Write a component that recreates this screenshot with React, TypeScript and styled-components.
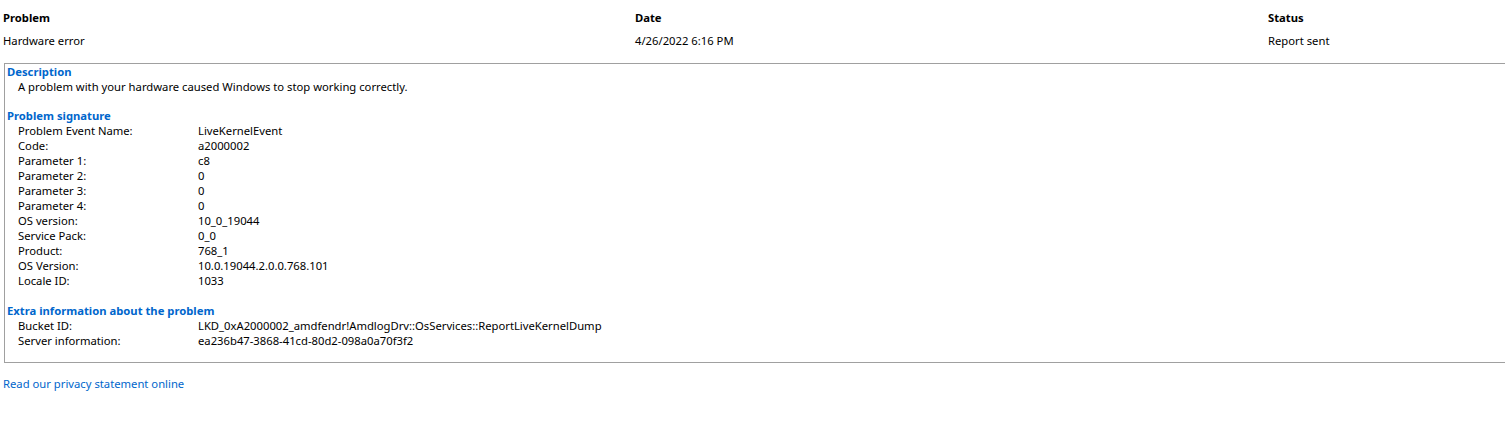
import styled, { createGlobalStyle } from "styled-components";

const Global = createGlobalStyle`
  html, body {
    margin: 0;
    padding: 0;
    background: #fff;
    overflow: hidden;
  }
  body {
    font-family: "Noto Sans", "Open Sans", sans-serif;
    font-size: 11.25px;
    color: #000;
  }
`;

const Page = styled.div`
  width: 1505px;
  padding: 10px 0 0 3px;
`;

const Summary = styled.div`
  display: grid;
  grid-template-columns: 632px 633px 1fr;
  row-gap: 8px;
  line-height: 15px;
`;

const HeadCell = styled.div`
  font-weight: 700;
`;

const Cell = styled.div``;

const Details = styled.div`
  margin-top: 15px;
  margin-left: 1px;
  width: 1510px;
  border: 1px solid #a0a0a0;
  padding: 0 0 14px 2px;
  line-height: 15px;
`;

const Section = styled.section<{ $gap?: number }>`
  margin-top: ${(p) => p.$gap ?? 0}px;
`;

const SectionTitle = styled.div`
  color: #0066cc;
  font-weight: 700;
`;

const Indented = styled.div`
  padding-left: 11px;
`;

const Row = styled.div`
  display: grid;
  grid-template-columns: 180px 1fr;
  padding-left: 11px;
`;

const PrivacyLink = styled.a`
  display: inline-block;
  margin-top: 13px;
  color: #0066cc;
  text-decoration: none;
  line-height: 15px;
`;

const signature: [string, string][] = [
  ["Problem Event Name:", "LiveKernelEvent"],
  ["Code:", "a2000002"],
  ["Parameter 1:", "c8"],
  ["Parameter 2:", "0"],
  ["Parameter 3:", "0"],
  ["Parameter 4:", "0"],
  ["OS version:", "10_0_19044"],
  ["Service Pack:", "0_0"],
  ["Product:", "768_1"],
  ["OS Version:", "10.0.19044.2.0.0.768.101"],
  ["Locale ID:", "1033"],
];

const extra: [string, string][] = [
  ["Bucket ID:", "LKD_0xA2000002_amdfendr!AmdlogDrv::OsServices::ReportLiveKernelDump"],
  ["Server information:", "ea236b47-3868-41cd-80d2-098a0a70f3f2"],
];

export default function App() {
  return (
    <>
      <Global />
      <Page>
        <Summary>
          <HeadCell>Problem</HeadCell>
          <HeadCell>Date</HeadCell>
          <HeadCell>Status</HeadCell>
          <Cell>Hardware error</Cell>
          <Cell>4/26/2022 6:16 PM</Cell>
          <Cell>Report sent</Cell>
        </Summary>
        <Details>
          <Section>
            <SectionTitle>Description</SectionTitle>
            <Indented>A problem with your hardware caused Windows to stop working correctly.</Indented>
          </Section>
          <Section $gap={14}>
            <SectionTitle>Problem signature</SectionTitle>
            {signature.map(([k, v]) => (
              <Row key={k}>
                <span>{k}</span>
                <span>{v}</span>
              </Row>
            ))}
          </Section>
          <Section $gap={15}>
            <SectionTitle>Extra information about the problem</SectionTitle>
            {extra.map(([k, v]) => (
              <Row key={k}>
                <span>{k}</span>
                <span>{v}</span>
              </Row>
            ))}
          </Section>
        </Details>
        <PrivacyLink href="#">Read our privacy statement online</PrivacyLink>
      </Page>
    </>
  );
}
